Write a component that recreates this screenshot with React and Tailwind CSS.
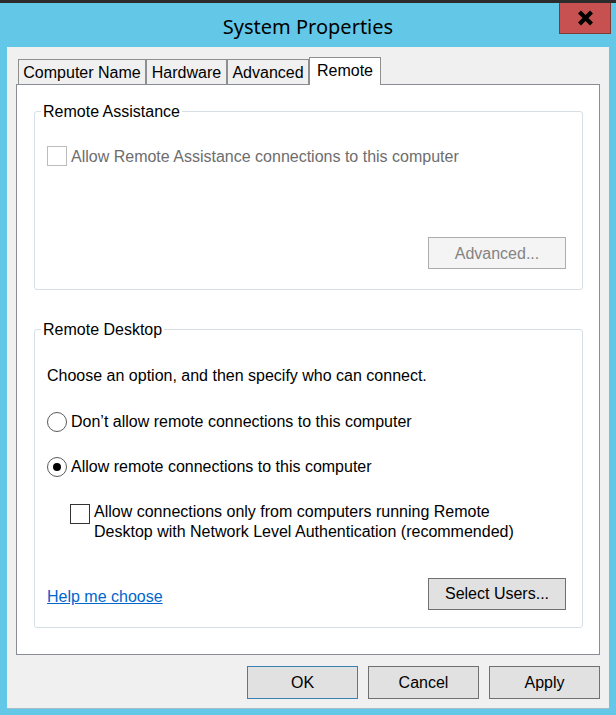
import React from 'react';

const tabs = [
  { label: 'Computer Name', w: 'w-[128px]' },
  { label: 'Hardware', w: 'w-[81px]' },
  { label: 'Advanced', w: 'w-[82px]' },
];

function Checkbox({ disabled }) {
  return (
    <span
      className={`block w-[20px] h-[20px] shrink-0 bg-white border ${
        disabled ? 'border-[#bcbcbc]' : 'border-[#333333]'
      }`}
    />
  );
}

function Radio({ checked }) {
  return (
    <span className="flex items-center justify-center w-[20px] h-[20px] shrink-0 rounded-full bg-white border border-[#5a5a5a]">
      {checked && <span className="block w-[8px] h-[8px] rounded-full bg-black" />}
    </span>
  );
}

function GroupBox({ title, className, children }) {
  return (
    <fieldset className={`ml-[17px] w-[549px] border border-[#d5dfe5] rounded-[3px] px-[6px] ${className}`}>
      <legend className="px-[2px] pt-[1px] leading-[18px] text-black">{title}</legend>
      {children}
    </fieldset>
  );
}

export default function App() {
  return (
    <div className="relative w-[616px] h-[715px] overflow-hidden bg-[#63c8e8] font-['Liberation_Sans',Arial,sans-serif] text-[16px] text-black">
      <div className="h-[3px] bg-[#2b2b2b]" />

      {/* title bar */}
      <div className="h-[44px] pt-[4px] flex items-center justify-center">
        <span className="font-['Noto_Sans',sans-serif] text-[20px] text-black">System Properties</span>
      </div>
      <button className="absolute top-[3px] left-[559px] w-[52px] h-[31px] flex items-center justify-center bg-[#c75050] border border-t-0 border-[#7f3a3a]">
        <svg width="17" height="16" viewBox="0 0 17 16">
          <path d="M2.5 2 L14.5 14 M14.5 2 L2.5 14" stroke="#000" strokeWidth="4.2" />
        </svg>
      </button>

      {/* dialog body */}
      <div className="ml-[7px] w-[602px] h-[662px] bg-[#f0f0f0] border-b border-[#a7bccb] pt-[10px]">
        {/* tabs */}
        <div className="flex items-start pl-[11px] h-[28px]">
          {tabs.map((t) => (
            <div
              key={t.label}
              className={`${t.w} mt-[2px] h-[25px] pt-[2px] border border-b-0 border-[#8e8f8f] bg-[#f0f0f0] flex items-center justify-center leading-[20px]`}
            >
              {t.label}
            </div>
          ))}
          <div className="relative z-10 w-[72px] h-[28px] border border-b-0 border-[#8e8f8f] bg-white flex justify-center pt-[3px] leading-[20px]">
            Remote
          </div>
        </div>

        {/* tab panel */}
        <div className="-mt-[1px] ml-[9px] w-[584px] h-[571px] bg-white border border-[#898c95] pt-[17px]">
          <GroupBox title="Remote Assistance" className="h-[188px]">
            <div className="mt-[25px] ml-[6px] flex items-center gap-[4px] h-[20px]">
              <Checkbox disabled />
              <span className="pt-[2px] leading-[20px] text-[#6d6d6d]">Allow Remote Assistance connections to this computer</span>
            </div>
            <div className="mt-[71px] flex justify-end mr-[10px]">
              <button className="w-[138px] h-[32px] pt-[2px] bg-[#f4f4f4] border border-[#adadad] text-[#838383]">
                Advanced...
              </button>
            </div>
          </GroupBox>

          <GroupBox title="Remote Desktop" className="mt-[30px] h-[308px]">
            <p className="mt-[27px] ml-[6px] leading-[20px]">Choose an option, and then specify who can connect.</p>

            <label className="mt-[26px] ml-[6px] flex items-center gap-[4px] h-[20px]">
              <Radio />
              <span className="leading-[20px]">Don’t allow remote connections to this computer</span>
            </label>

            <label className="mt-[25px] ml-[6px] flex items-center gap-[4px] h-[20px]">
              <Radio checked />
              <span className="leading-[20px]">Allow remote connections to this computer</span>
            </label>

            <label className="mt-[25px] ml-[29px] flex items-start gap-[4px]">
              <span className="mt-[2px]">
                <Checkbox />
              </span>
              <span className="leading-[20px]">
                Allow connections only from computers running Remote
                <br />
                Desktop with Network Level Authentication (recommended)
              </span>
            </label>

            <div className="mt-[36px] ml-[6px] mr-[10px] flex items-start justify-between">
              <a href="#" className="mt-[9px] leading-[20px] text-[#0066cc] underline">
                Help me choose
              </a>
              <button className="w-[138px] h-[32px] bg-[#e1e1e1] border border-[#707070]">Select Users...</button>
            </div>
          </GroupBox>
        </div>

        {/* dialog buttons */}
        <div className="mt-[11px] pr-[9px] flex justify-end gap-[10px]">
          <button className="w-[111px] h-[33px] pt-[1px] bg-[#e1e1e1] border border-[#3c7fb1]">OK</button>
          <button className="w-[111px] h-[33px] pt-[1px] bg-[#e1e1e1] border border-[#707070]">Cancel</button>
          <button className="w-[111px] h-[33px] pt-[1px] bg-[#e1e1e1] border border-[#707070]">Apply</button>
        </div>
      </div>
    </div>
  );
}
